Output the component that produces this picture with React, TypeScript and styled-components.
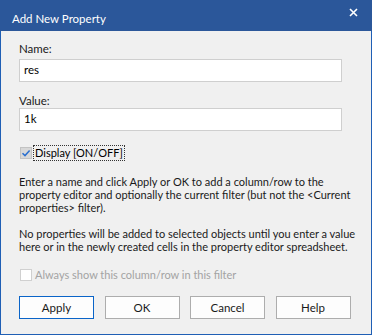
import React from "react";
import styled, { createGlobalStyle } from "styled-components";

const Global = createGlobalStyle`
  html, body { margin: 0; padding: 0; background: #f0f0f0; }
  * { box-sizing: border-box; }
`;

const Window = styled.div`
  width: 372px;
  height: 335px;
  display: flex;
  flex-direction: column;
  background: #f0f0f0;
  border: 1px solid #1f5fb5;
  border-top: none;
  font-family: Lato, Roboto, "Liberation Sans", Arial, sans-serif;
  font-size: 11.5px;
  color: #000;
`;

const TitleBar = styled.div`
  height: 31px;
  flex: none;
  background: #2b579a;
  color: #fff;
  display: flex;
  align-items: flex-start;
  justify-content: space-between;
  padding: 11px 14px 0 12px;
  margin: 0 -1px;
  font-size: 11.5px;
  line-height: 16px;
`;

const CloseIcon = styled.svg`
  margin-top: -3px;
`;

const Body = styled.div`
  padding: 10px 0 0 18px;
  display: flex;
  flex-direction: column;
`;

const Label = styled.div<{ $mt?: number }>`
  line-height: 15px;
  margin-top: ${(p) => p.$mt ?? 0}px;
  color: #1a1a1a;
`;

const Input = styled.div<{ $mt?: number }>`
  width: 323px;
  height: 23px;
  margin-top: ${(p) => p.$mt ?? 0}px;
  background: #fff;
  border: 1px solid #cfcfcf;
  padding: 3px 4px 0 4px;
  line-height: 14px;
  color: #000;
`;

const CheckRow = styled.div<{ $mt: number; $disabled?: boolean }>`
  display: flex;
  align-items: center;
  margin-top: ${(p) => p.$mt}px;
  margin-left: 1px;
  font-size: 11px;
  color: ${(p) => (p.$disabled ? "#a3a3a3" : "#000")};
`;

const Box = styled.div<{ $checked?: boolean }>`
  width: 12px;
  height: 12px;
  border: 1px solid ${(p) => (p.$checked ? "#c3c3c3" : "#d0d0d0")};
  background: ${(p) => (p.$checked ? "#d8d8d8" : "#fff")};
  display: flex;
  align-items: center;
  justify-content: center;
  flex: none;
`;

const CheckText = styled.span<{ $focus?: boolean }>`
  margin-left: 1px;
  padding: 0 1px;
  line-height: 14px;
  border: 1px dotted ${(p) => (p.$focus ? "#333" : "transparent")};
`;

const Para = styled.p<{ $mt: number }>`
  margin: ${(p) => p.$mt}px 0 0 0;
  font-size: 11px;
  line-height: 13px;
  color: #1a1a1a;
  white-space: nowrap;
`;

const Buttons = styled.div`
  display: flex;
  gap: 10.5px;
  margin-top: 13px;
`;

const Button = styled.div<{ $default?: boolean }>`
  width: 75px;
  height: 23px;
  display: flex;
  align-items: center;
  justify-content: center;
  background: #fdfdfd;
  border: 1px solid ${(p) => (p.$default ? "#0a64c8" : "#adadad")};
  color: #1a1a1a;
`;

export default function App() {
  return (
    <>
      <Global />
      <Window>
        <TitleBar>
          <span>Add New Property</span>
          <CloseIcon width="9" height="9" viewBox="0 0 9 9">
            <path d="M1 1 L8 8 M8 1 L1 8" stroke="#fff" strokeWidth="1.6" />
          </CloseIcon>
        </TitleBar>
        <Body>
          <Label>Name:</Label>
          <Input $mt={3}>res</Input>
          <Label $mt={11}>Value:</Label>
          <Input $mt={0}>1k</Input>
          <CheckRow $mt={14}>
            <Box $checked>
              <svg width="10" height="10" viewBox="0 0 10 10">
                <path d="M1.5 5.2 L4 7.6 L8.6 2.6" stroke="#2a6fcf" strokeWidth="1.5" fill="none" />
              </svg>
            </Box>
            <CheckText $focus>Display [ON/OFF]</CheckText>
          </CheckRow>
          <Para $mt={14}>
            Enter a name and click Apply or OK to add a column/row to the
            <br />
            property editor and optionally the current filter (but not the &lt;Current
            <br />
            properties&gt; filter).
          </Para>
          <Para $mt={13}>
            No properties will be added to selected objects until you enter a value
            <br />
            here or in the newly created cells in the property editor spreadsheet.
          </Para>
          <CheckRow $mt={14} $disabled>
            <Box />
            <CheckText>Always show this column/row in this filter</CheckText>
          </CheckRow>
          <Buttons>
            <Button $default>Apply</Button>
            <Button>OK</Button>
            <Button>Cancel</Button>
            <Button>Help</Button>
          </Buttons>
        </Body>
      </Window>
    </>
  );
}
